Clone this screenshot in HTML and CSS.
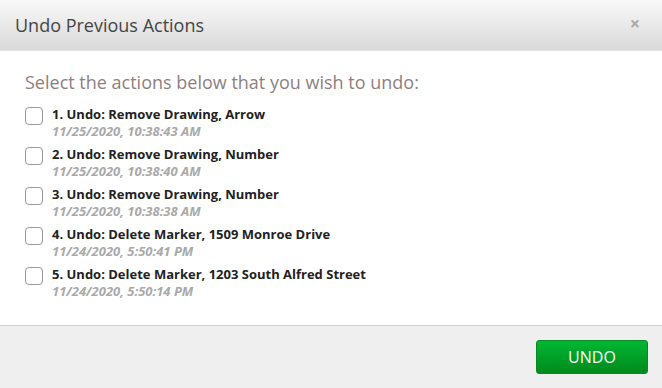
FILE: index.html
```html
<!DOCTYPE html>
<html>
<head>
<meta charset="utf-8">
<link rel="stylesheet" href="styles.css">
</head>
<body>
<div class="modal">
  <div class="header">
    <h1 class="title">Undo Previous Actions</h1>
    <span class="close">×</span>
  </div>
  <div class="body">
    <p class="lead">Select the actions below that you wish to undo:</p>
    <ul class="list">
      <li class="item"><span class="box"></span><div class="text"><div class="name">1. Undo: Remove Drawing, Arrow</div><div class="date">11/25/2020, 10:38:43 AM</div></div></li>
      <li class="item"><span class="box"></span><div class="text"><div class="name">2. Undo: Remove Drawing, Number</div><div class="date">11/25/2020, 10:38:40 AM</div></div></li>
      <li class="item"><span class="box"></span><div class="text"><div class="name">3. Undo: Remove Drawing, Number</div><div class="date">11/25/2020, 10:38:38 AM</div></div></li>
      <li class="item"><span class="box"></span><div class="text"><div class="name">4. Undo: Delete Marker, 1509 Monroe Drive</div><div class="date">11/24/2020, 5:50:41 PM</div></div></li>
      <li class="item"><span class="box"></span><div class="text"><div class="name">5. Undo: Delete Marker, 1203 South Alfred Street</div><div class="date">11/24/2020, 5:50:14 PM</div></div></li>
    </ul>
  </div>
  <div class="footer">
    <button class="undo">UNDO</button>
  </div>
</div>
</body>
</html>
```

FILE: styles.css
```css
html, body { margin: 0; padding: 0; }
body { font-family: "Open Sans", sans-serif; background: #fff; width: 662px; height: 388px; overflow: hidden; }
.modal { display: flex; flex-direction: column; height: 388px; }
.header {
  height: 51px; box-sizing: border-box;
  background: linear-gradient(#f9f9f9, #d9d9d9);
  border-bottom: 1px solid #e4e4e4;
  display: flex; align-items: center; justify-content: space-between;
  padding: 0 22px 0 15px;
}
.title { margin: 0; font-weight: 400; font-size: 18px; color: #444; }
.close { font-size: 18px; font-weight: 700; color: #aaa; margin-top: -5px; }
.body { flex: 1; padding: 16px 25px 0; }
.lead { margin: 0 0 8px; font-size: 18px; color: #8e7f7f; line-height: 30px; }
.list { list-style: none; margin: 0; padding: 0; }
.item { display: flex; align-items: flex-start; height: 40px; }
.box {
  width: 16px; height: 16px; border: 1px solid #9a9a9a; border-radius: 4px;
  margin-top: 2px; margin-right: 9px; background: #fff;
}
.name { font-size: 13px; font-weight: 700; color: #222; line-height: 18px; }
.date { font-size: 13px; font-weight: 700; font-style: italic; color: #a9a9a9; line-height: 17px; }
.footer {
  height: 63px; box-sizing: border-box;
  background: #efefef; border-top: 1px solid #d2d2d2;
  display: flex; justify-content: flex-end; align-items: flex-start;
  padding: 14px 14px 0 0;
}
.undo {
  width: 112px; height: 34px; border: 1px solid #078a24; border-radius: 3px;
  background: linear-gradient(#00b732, #008a1d);
  color: #fff; font-family: "Open Sans", sans-serif; font-size: 16px; cursor: pointer;
}
```
